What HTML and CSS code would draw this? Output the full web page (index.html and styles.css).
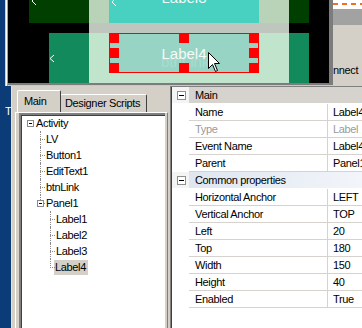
FILE: index.html
```html
<!DOCTYPE html>
<html>
<head>
<meta charset="utf-8">
<link rel="stylesheet" href="styles.css">
</head>
<body>
<div class="top">
  <div class="blue-top"></div>
  <div class="frame">
    <div class="canvas">
      <div class="v dkgreen" style="left:21px;top:0;width:60px;height:23px"><svg class="chev" width="6" height="8" viewBox="0 0 6 8"><polyline points="5,-3 1,1 5,5" /></svg></div>
      <div class="v sage" style="left:81px;top:0;width:20px;height:23px"></div>
      <div class="v teal" style="left:101px;top:0;width:150px;height:23px"><svg class="chev" width="6" height="8" viewBox="0 0 6 8"><polyline points="5,-2 1,2 5,6" /></svg><span class="ghost g3">btnLink</span><span class="lab l3">Label3</span></div>
      <div class="v sage" style="left:251px;top:0;width:30px;height:23px"></div>
      <div class="v dkgreen" style="left:281px;top:0;width:20px;height:23px"></div>
      <div class="v band" style="left:81px;top:23px;width:200px;height:10px"></div>
      <div class="v green" style="left:41px;top:33px;width:40px;height:50px"><svg class="chev c2" width="6" height="9" viewBox="0 0 6 9"><polyline points="5,1 1,4.5 5,8" /></svg></div>
      <div class="v pale" style="left:81px;top:33px;width:200px;height:50px"></div>
      <div class="v green" style="left:281px;top:33px;width:20px;height:50px"></div>
      <div class="v selbox" style="left:101px;top:33px;width:150px;height:40px">
        <span class="ghost g4">btnLink</span>
        <span class="lab l4">Label4</span>
        <i class="h" style="left:-1px;top:-1px"></i>
        <i class="h" style="left:69px;top:-1px"></i>
        <i class="h" style="right:-1px;top:-1px"></i>
        <i class="h" style="left:-1px;top:14px"></i>
        <i class="h" style="right:-1px;top:14px"></i>
        <i class="h" style="left:-1px;bottom:-1px"></i>
        <i class="h" style="left:69px;bottom:-1px"></i>
        <i class="h" style="right:-1px;bottom:-1px"></i>
      </div>
      <svg class="cursor" width="13" height="21" viewBox="0 0 13 21"><path d="M0.5,0.5 L0.5,16.5 L4.5,12.5 L7.5,19.5 L9.5,18.5 L6.5,11.5 L11.5,11.5 Z"/></svg>
    </div>
  </div>
  <div class="side">
    <div class="dash"></div>
    <div class="grayband"></div>
    <div class="conn">nnect</div>
  </div>
</div>
<div class="bottom">
  <div class="blue"><span class="bt">T</span></div>
  <div class="edge"></div>
  <div class="tabs">
    <div class="tabstrip">
      <div class="tab active">Main</div>
      <div class="tab">Designer Scripts</div>
    </div>
    <div class="page">
      <div class="tree">
        <div class="node">
          <div class="row"><span class="exp"></span>Activity</div>
          <div class="kids">
            <div class="row">LV</div>
            <div class="row">Button1</div>
            <div class="row">EditText1</div>
            <div class="row">btnLink</div>
            <div class="node">
              <div class="row"><span class="exp"></span>Panel1</div>
              <div class="kids">
                <div class="row">Label1</div>
                <div class="row">Label2</div>
                <div class="row">Label3</div>
                <div class="row"><span class="sel">Label4</span></div>
              </div>
            </div>
          </div>
        </div>
      </div>
    </div>
  </div>
  <div class="split"></div>
  <div class="grid">
    <div class="prow cat sel-cat"><span class="gut"><span class="box"></span></span><span class="cn">Main</span></div>
    <div class="prow"><span class="gut"></span><span class="n">Name</span><span class="val">Label4</span></div>
    <div class="prow ro"><span class="gut"></span><span class="n">Type</span><span class="val">Label</span></div>
    <div class="prow"><span class="gut"></span><span class="n">Event Name</span><span class="val">Label4</span></div>
    <div class="prow"><span class="gut"></span><span class="n">Parent</span><span class="val">Panel1</span></div>
    <div class="prow cat"><span class="gut"><span class="box"></span></span><span class="cn">Common properties</span></div>
    <div class="prow"><span class="gut"></span><span class="n">Horizontal Anchor</span><span class="val">LEFT</span></div>
    <div class="prow"><span class="gut"></span><span class="n">Vertical Anchor</span><span class="val">TOP</span></div>
    <div class="prow"><span class="gut"></span><span class="n">Left</span><span class="val">20</span></div>
    <div class="prow"><span class="gut"></span><span class="n">Top</span><span class="val">180</span></div>
    <div class="prow"><span class="gut"></span><span class="n">Width</span><span class="val">150</span></div>
    <div class="prow"><span class="gut"></span><span class="n">Height</span><span class="val">40</span></div>
    <div class="prow"><span class="gut"></span><span class="n">Enabled</span><span class="val">True</span></div>
  </div>
</div>
</body>
</html>
```
FILE: styles.css
```css
* { box-sizing: border-box; }
html, body { margin: 0; padding: 0; }
body {
  width: 362px;
  height: 328px;
  overflow: hidden;
  background: #d4d0c8;
  font-family: "Liberation Sans", Arial, sans-serif;
  font-size: 11px;
  letter-spacing: -0.35px;
  color: #000;
}

/* ---------- top: designer window ---------- */
.top { display: flex; height: 86px; }
.blue-top { width: 5px; background: #0b3c78; }
.frame {
  width: 328px;
  padding: 0 4px 3px 3px;
  background: #7c7c7c;
  box-shadow: inset 1px 0 0 #d4d0c8, inset 2px 0 0 #ffffff, inset 3px 0 0 #a0a0a0, inset 0 -1px 0 #c8c8c8;
}
.canvas {
  position: relative;
  width: 321px;
  height: 83px;
  background: #000;
  overflow: hidden;
}
.v { position: absolute; }
.dkgreen { background: #003f00; }
.sage { background: #b9d3b9; }
.teal { background: #48d0c0; }
.band { background: #bfc6bd; }
.green { background: #128a5c; }
.pale { background: #c1e4cc; }
.chev { position: absolute; left: 2px; top: 0; }
.chev polyline { fill: none; stroke: #fff; stroke-width: 1; }
.c2 { left: 0; top: 21px; }
.lab {
  position: absolute;
  left: 0; right: 0;
  text-align: center;
  color: #f4fbf8;
  font-size: 15px;
  letter-spacing: 0;
  line-height: 18px;
}
.l3 { top: -11px; }
.l4 { top: 11px; }
.ghost {
  position: absolute;
  font-size: 15px;
  letter-spacing: 0;
  line-height: 18px;
}
.g3 { left: 33px; top: -14px; color: #5ed8c8; }
.g4 { left: 51px; top: 19px; color: #a9dccf; }
.selbox {
  border: 1px solid #ff0000;
  background: #98d4c4;
}
.h {
  position: absolute;
  width: 10px;
  height: 10px;
  background: #ff0000;
}
.cursor { position: absolute; left: 200px; top: 52px; }
.cursor path { fill: #fff; stroke: #000; stroke-width: 1; }

.side { width: 29px; display: flex; flex-direction: column; }
.dash {
  height: 9px;
  background: #fff;
  border-top: 3px solid #fff;
  position: relative;
}
.dash::after {
  content: "";
  position: absolute;
  left: 0; right: 0; top: 0;
  height: 2px;
  background: repeating-linear-gradient(to right, #f07020 0 5px, transparent 5px 9px);
}
.grayband { height: 16px; background: #a2a2a2; }
.conn { padding-top: 39px; line-height: 13px; white-space: nowrap; overflow: hidden; }

/* ---------- bottom ---------- */
.bottom { display: flex; height: 242px; }
.blue { width: 11px; background: #0b3c78; position: relative; }
.bt { color: #fff; font-size: 11px; display: block; padding: 19px 0 0 5px; line-height: 12px; }
.edge { width: 1px; background: #e4e2dc; }

.tabs { width: 156px; padding: 4px 0 0 3px; display: flex; flex-direction: column; }
.tabstrip { display: flex; align-items: flex-end; height: 22px; padding-left: 2px; }
.tab {
  height: 18px;
  line-height: 17px;
  padding: 0 5px 0 4px;
  border-top: 1px solid #fff;
  border-left: 1px solid #fff;
  border-right: 1px solid #404040;
  border-radius: 2px 2px 0 0;
  white-space: nowrap;
}
.tab.active {
  height: 22px;
  line-height: 20px;
  width: 44px;
  padding-left: 6px;
  margin-right: -1px;
  position: relative;
  z-index: 1;
  background: #d4d0c8;
}
.tab:not(.active) { width: 87px; padding-left: 4px; }
.page {
  flex: 1;
  border-top: 1px solid #fff;
  border-left: 1px solid #fff;
  border-right: 1px solid #808080;
  padding: 0 2px 0 3px;
}
.tree {
  height: 100%;
  background: #fff;
  border-top: 2px solid #808080;
  border-left: 2px solid #808080;
  box-shadow: inset 1px 1px 0 #404040;
  padding-top: 0;
}

.row {
  position: relative;
  height: 16px;
  line-height: 16px;
  padding-left: 15px;
  white-space: nowrap;
}
.kids { margin-left: 10px; }
.kids > .row, .kids > .node { position: relative; }
.kids > .row::before, .kids > .node > .row::before {
  content: "";
  position: absolute;
  left: 9px;
  top: 8px;
  width: 5px;
  border-top: 1px dotted #8a8a8a;
}
.kids > .row::after, .kids > .node::after {
  content: "";
  position: absolute;
  left: 9px;
  top: 0;
  height: 100%;
  border-left: 1px dotted #8a8a8a;
}
.kids > :last-child::after { height: 9px; }
.exp {
  position: absolute;
  left: 6px;
  top: 5px;
  width: 7px;
  height: 7px;
  background: #fff;
  border: 1px solid #8a8a8a;
  z-index: 1;
}
.exp::after {
  content: "";
  position: absolute;
  left: 1px;
  top: 2px;
  width: 3px;
  height: 1px;
  background: #000;
}
.sel {
  background: #d4d0c8;
  display: inline-block;
  height: 15px;
  line-height: 15px;
  padding: 0 2px 0 1px;
  margin-left: -2px;
}

.split { width: 2px; }
.grid {
  flex: 1;
  background: #fff;
  border-top: 1px solid #808080;
  border-left: 1px solid #808080;
  box-shadow: inset 1px 1px 0 #404040;
  padding: 0 0 0 1px;
  overflow: hidden;
}
.prow {
  display: grid;
  grid-template-columns: 17px 139px 1fr;
  height: 17px;
  line-height: 16px;
  white-space: nowrap;
}
.prow .n {
  padding-left: 6px;
  border-bottom: 1px solid #d6d3ce;
  border-right: 1px solid #d6d3ce;
}
.prow .val {
  padding-left: 5px;
  border-bottom: 1px solid #d6d3ce;
  overflow: hidden;
}
.ro { color: #9a9a9a; }
.gut { position: relative; background: #fff; }
.cat { grid-template-columns: 17px 1fr; }
.cat .gut { background: #f4f4f4; border-bottom: 1px solid #fff; }
.cat .cn {
  padding-left: 6px;
  border-bottom: 1px solid #fff;
  background: linear-gradient(to right, #dfe6f0, #f2f5fa);
}
.sel-cat .cn { background: #d6d3ce; }
.box {
  position: absolute;
  left: 5px;
  top: 4px;
  width: 9px;
  height: 9px;
  border: 1px solid #8f8f8f;
  background: #fff;
}
.box::after {
  content: "";
  position: absolute;
  left: 1px;
  top: 3px;
  width: 5px;
  height: 1px;
  background: #000;
}
```
